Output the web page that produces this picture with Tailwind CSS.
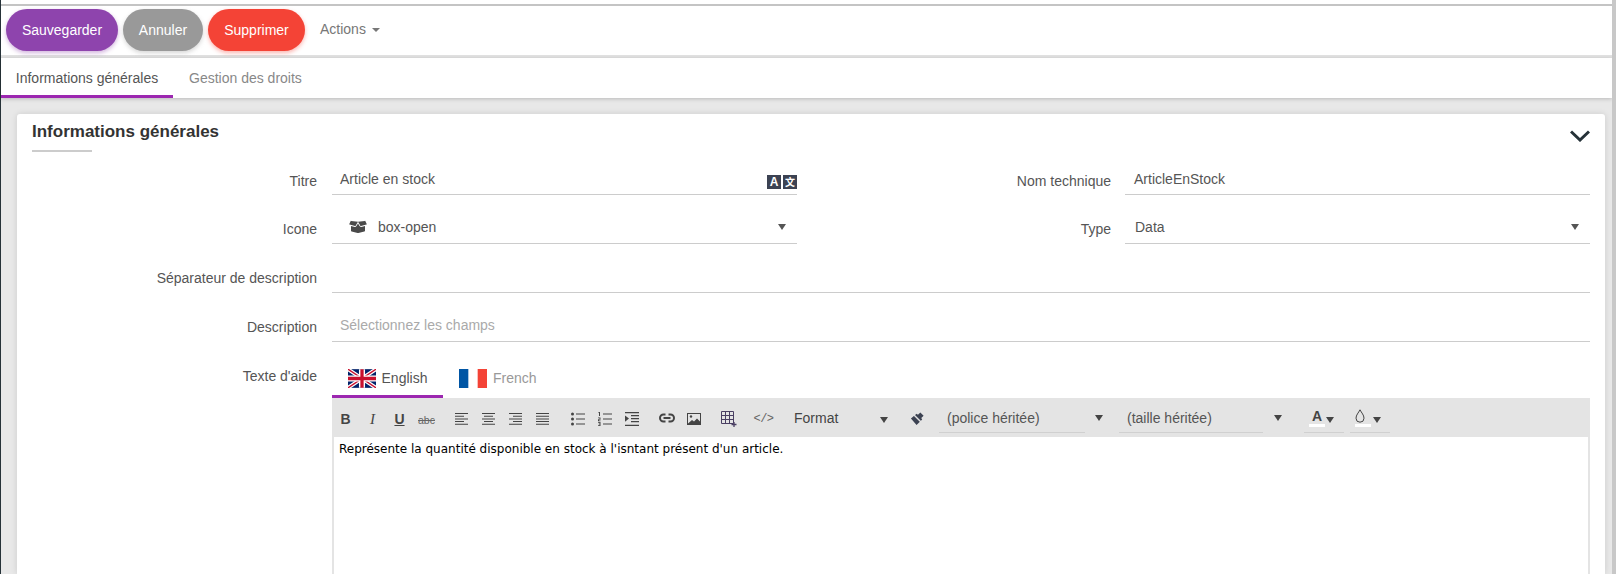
<!DOCTYPE html>
<html lang="fr">
<head>
  <meta charset="UTF-8" />
  <title>Article en stock</title>
  <script src="https://cdn.jsdelivr.net/npm/@tailwindcss/browser@4"></script>
</head>
<body class="h-[574px] overflow-hidden bg-[#e8e8e8] font-['Liberation_Sans',Arial,sans-serif] text-[14px] text-[#555]">
  <div class="flex h-[574px] border-l border-[#263238]">
    <div class="flex min-w-0 flex-1 flex-col">

      <!-- Actions bar -->
      <div class="h-[6px] border-b-2 border-[#c4c4c4] bg-white"></div>
      <div class="flex h-[52px] items-center gap-[5px] border-b-[3px] border-[#e2e2e2] bg-white pb-[1px] pl-[5px]">
        <button class="h-[42px] w-[112px] rounded-full bg-[#8e44ad] text-white shadow-[0_2px_4px_rgba(142,68,173,0.4)]">Sauvegarder</button>
        <button class="h-[42px] w-[80px] rounded-full bg-[#999] text-white shadow-[0_2px_4px_rgba(153,153,153,0.4)]">Annuler</button>
        <button class="h-[42px] w-[97px] rounded-full bg-[#f44336] text-white shadow-[0_2px_4px_rgba(244,67,54,0.4)]">Supprimer</button>
        <div class="ml-[10px] mb-[2px] flex items-center gap-[6px] text-[#777]">Actions <span class="mt-[2px] h-0 w-0 border-x-[4px] border-t-[4px] border-x-transparent border-t-[#777]"></span></div>
      </div>

      <!-- Tabs -->
      <div class="flex h-[40px] bg-white shadow-[0_1px_4px_rgba(0,0,0,0.2)]">
        <div class="flex h-[40px] w-[172px] items-center justify-center border-b-[3px] border-[#9c27b0] pt-[3px] text-[#555]">Informations générales</div>
        <div class="flex h-[40px] items-center pl-[16px] text-[#888]">Gestion des droits</div>
      </div>

      <!-- Card -->
      <div class="flex min-h-0 flex-1 pl-[16px] pr-[7px] pt-[16px]">
        <div class="relative flex-1 overflow-hidden rounded-t-[3px] bg-white shadow-[0_0_6px_rgba(0,0,0,0.12)]">
          <div class="pl-[15px] pt-[8px]">
            <h2 class="text-[17px] leading-[20px] font-bold text-[#333]">Informations générales</h2>
            <div class="mt-[8px] h-[2px] w-[60px] bg-[#ccc]"></div>
          </div>
          <svg class="absolute right-[15px] top-[16px] h-[12px] w-[20px]" viewBox="0 0 20 12" fill="none"><path d="M1 1.500 10 10l9-8.500" stroke="#263238" stroke-width="3"/></svg>

          <div class="pr-[15px] pt-[2px]">
            <!-- Titre / Nom technique -->
            <div class="mb-[3px] flex items-end">
              <label class="w-[300px] pb-[4px] text-right leading-[20px]">Titre</label>
              <div class="relative ml-[15px] h-[41px] w-[465px] border-b border-[#ccc] pl-[8px] pt-[15px] leading-[20px]">
                Article en stock
                <div class="absolute bottom-[5px] right-0 flex gap-[2px]">
                  <span class="flex h-[14px] w-[14px] items-center justify-center bg-[#3c4252] text-[12px] font-bold text-white">A</span>
                  <span class="flex h-[14px] w-[14px] items-center justify-center bg-[#3c4252] font-['Noto_Sans_CJK_SC',sans-serif] text-[10px] font-bold text-white">文</span>
                </div>
              </div>
              <label class="w-[314px] pb-[4px] text-right leading-[20px]">Nom technique</label>
              <div class="ml-[14px] h-[41px] flex-1 border-b border-[#ccc] pl-[9px] pt-[15px] leading-[20px]">ArticleEnStock</div>
            </div>
            <!-- Icone / Type -->
            <div class="mb-[3px] flex items-end">
              <label class="w-[300px] pb-[5px] text-right leading-[20px]">Icone</label>
              <div class="relative ml-[15px] flex h-[46px] w-[465px] items-end border-b border-[#ccc] pb-[6px] pl-[17px] leading-[20px]">
                <svg class="mb-[3px] h-[14px] w-[18px]" viewBox="0 0 640 512" fill="#4a4a4a"><path d="M425.700 256c-16.900 0-32.800-9-41.400-23.400L320 126l-64.200 106.600c-8.700 14.500-24.600 23.500-41.500 23.500-4.500 0-9-.6-13.300-1.900L64 215v178c0 14.700 10 27.500 24.200 31l216.200 54.100c10.200 2.500 20.900 2.500 31 0L551.800 424c14.200-3.600 24.200-16.400 24.200-31V215l-137 39.100c-4.300 1.300-8.800 1.900-13.300 1.900zm212.600-112.200L586.800 41c-3.100-6.200-9.800-9.800-16.700-8.900L320 64l91.700 152.100c3.800 6.300 11.400 9.300 18.500 7.300l197.900-56.500c9.900-2.900 14.700-13.900 10.200-23.100zM53.200 41L1.700 143.800c-4.600 9.200.3 20.200 10.100 23l197.900 56.500c7.100 2 14.700-1 18.500-7.300L320 64 69.800 32.100c-6.900-.8-13.500 2.700-16.600 8.900z"/></svg>
                <span class="ml-[11px]">box-open</span>
                <span class="absolute bottom-[13px] right-[11px] h-0 w-0 border-x-[4px] border-t-[6px] border-x-transparent border-t-[#555]"></span>
              </div>
              <label class="w-[314px] pb-[5px] text-right leading-[20px]">Type</label>
              <div class="relative ml-[14px] flex h-[46px] flex-1 items-end border-b border-[#ccc] pb-[6px] pl-[10px] leading-[20px]">
                <span>Data</span>
                <span class="absolute bottom-[13px] right-[11px] h-0 w-0 border-x-[4px] border-t-[6px] border-x-transparent border-t-[#555]"></span>
              </div>
            </div>
            <!-- Separateur -->
            <div class="mb-[3px] flex items-end">
              <label class="w-[300px] pb-[5px] text-right leading-[20px]">Séparateur de description</label>
              <div class="ml-[15px] h-[46px] flex-1 border-b border-[#ccc]"></div>
            </div>
            <!-- Description -->
            <div class="mb-[3px] flex items-end">
              <label class="w-[300px] pb-[5px] text-right leading-[20px]">Description</label>
              <div class="ml-[15px] flex h-[46px] flex-1 items-end border-b border-[#ccc] pb-[6px] pl-[8px] leading-[20px] text-[#aaa]">Sélectionnez les champs</div>
            </div>
            <!-- Texte d'aide -->
            <div class="flex">
              <label class="w-[300px] pt-[21px] text-right leading-[20px]">Texte d'aide</label>
              <div class="ml-[15px] flex-1">
                <div class="flex h-[53px] items-end">
                  <div class="flex h-[37px] w-[111px] items-center justify-center gap-[6px] border-b-[3px] border-[#9c27b0]">
                    <svg class="h-[19px] w-[28px]" viewBox="0 0 60 40"><rect width="60" height="40" fill="#012169"/><path d="M0 0l60 40M60 0 0 40" stroke="#fff" stroke-width="8"/><path d="M0 0l60 40M60 0 0 40" stroke="#c8102e" stroke-width="3"/><path d="M30 0v40M0 20h60" stroke="#fff" stroke-width="13"/><path d="M30 0v40M0 20h60" stroke="#c8102e" stroke-width="7"/></svg>
                    <span>English</span>
                  </div>
                  <div class="flex h-[37px] items-center gap-[6px] pb-[3px] pl-[16px] text-[#999]">
                    <svg class="h-[19px] w-[28px]" viewBox="0 0 3 2" preserveAspectRatio="none"><rect width="1" height="2" fill="#0055a4"/><rect x="2" width="1" height="2" fill="#f44336"/></svg>
                    <span>French</span>
                  </div>
                </div>

                <!-- Editor toolbar -->
                <div class="flex h-[39px] items-center gap-[8px] bg-[#e4e4e4] pt-[2px] text-[#444]">
                  <div class="flex items-center">
                    <span class="mt-[2px] w-[27px] text-center text-[14px] font-bold">B</span>
                    <span class="mt-[2px] w-[27px] text-center font-['Liberation_Serif',serif] text-[15px] italic">I</span>
                    <span class="mt-[2px] w-[27px] text-center text-[14px] font-bold underline">U</span>
                    <span class="mt-[5px] w-[27px] text-center text-[10.500px] text-[#666] line-through">abc</span>
                  </div>
                  <div class="flex">
                    <span class="flex w-[27px] justify-center"><svg class="h-[12px] w-[13px]" viewBox="0 0 13 12" fill="currentColor"><path d="M0 0h13v1H0zM0 2.700h9v1H0zM0 5.400h13v1H0zM0 8.100h9v1H0zM0 10.800h13v1H0z"/></svg></span>
                    <span class="flex w-[27px] justify-center"><svg class="h-[12px] w-[13px]" viewBox="0 0 13 12" fill="currentColor"><path d="M0 0h13v1H0zM2 2.700h9v1H2zM0 5.400h13v1H0zM2 8.100h9v1H2zM0 10.800h13v1H0z"/></svg></span>
                    <span class="flex w-[27px] justify-center"><svg class="h-[12px] w-[13px]" viewBox="0 0 13 12" fill="currentColor"><path d="M0 0h13v1H0zM4 2.700h9v1H4zM0 5.400h13v1H0zM4 8.100h9v1H4zM0 10.800h13v1H0z"/></svg></span>
                    <span class="flex w-[27px] justify-center"><svg class="h-[12px] w-[13px]" viewBox="0 0 13 12" fill="currentColor"><path d="M0 0h13v1H0zM0 2.700h13v1H0zM0 5.400h13v1H0zM0 8.100h13v1H0zM0 10.800h13v1H0z"/></svg></span>
                  </div>
                  <div class="flex">
                    <span class="flex w-[27px] justify-center"><svg class="h-[14px] w-[14px]" viewBox="0 0 14 14" fill="currentColor"><circle cx="1.500" cy="2" r="1.500"/><circle cx="1.500" cy="7" r="1.500"/><circle cx="1.500" cy="12" r="1.500"/><path d="M5 1.500h9v1H5zM5 6.500h9v1H5zM5 11.500h9v1H5z"/></svg></span>
                    <span class="flex w-[27px] justify-center"><svg class="h-[14px] w-[14px]" viewBox="0 0 14 14" fill="currentColor"><path d="M0.500 0h1.500v4H1V1H.500zM0 5.500h2.500v2.200H1V8.500h1.500v.7H0V7.200h1.500v-1H0zM0 10h2.500v4H0v-.7h1.500v-1H.600v-.6h.9v-1H0zM5 1.500h9v1H5zM5 6.500h9v1H5zM5 11.500h9v1H5z"/></svg></span>
                    <span class="flex w-[27px] justify-center"><svg class="h-[14px] w-[14px]" viewBox="0 0 14 14" fill="currentColor"><path d="M0 0h14v1.200H0zM6 3h8v1.200H6zM6 6h8v1.200H6zM6 9h8v1.200H6zM0 12.800h14V14H0zM0 3.500 4 6.600 0 9.700z"/></svg></span>
                  </div>
                  <div class="flex">
                    <span class="flex w-[27px] justify-center"><svg class="h-[10px] w-[16px]" viewBox="0 0 16 10" fill="none" stroke="currentColor" stroke-width="2"><path d="M6.500 1.500H4.500a3.500 3.500 0 0 0 0 7h2M9.500 1.500h2a3.500 3.500 0 0 1 0 7h-2M4.500 5h7"/></svg></span>
                    <span class="flex w-[27px] justify-center"><svg class="h-[12px] w-[14px]" viewBox="0 0 14 12"><path fill="currentColor" d="M0 0h14v12H0z"/><path fill="#e4e4e4" d="M1 1h12v7.500l-3-3-3 3-2-1.500-4 3.500z"/><circle cx="4" cy="3.500" r="1.200" fill="currentColor"/></svg></span>
                  </div>
                  <span class="flex w-[27px] justify-center"><svg class="h-[16px] w-[16px]" viewBox="0 0 16 16" fill="none" stroke="#4a3f63"><path d="M.500.500h12v12H.500zM.500 4.500h12M.500 8.500h12M4.500.500v12M8.500.500v12"/><path d="M13 11v5M10.500 13.500h5" stroke-width="1.300"/></svg></span>
                  <span class="w-[27px] text-center font-['Liberation_Mono',monospace] text-[12px] tracking-[-0.5px] text-[#666]">&lt;/&gt;</span>
                  <div class="ml-[9px] flex w-[94px] items-center justify-between">
                    <span class="text-[14px]">Format</span>
                    <span class="mt-[2px] h-0 w-0 border-x-[4px] border-t-[6px] border-x-transparent border-t-[#444]"></span>
                  </div>
                  <svg class="ml-[14px] h-[15px] w-[15px]" viewBox="0 0 16 16"><path fill="#3c4252" d="M1 8 7 3l1.500 1L11 1.500 14.500 5 12 7.500l1 1.500-6 6z"/><path d="M1 1l14 14" stroke="#e4e4e4" stroke-width="1.500"/></svg>
                  <div class="relative ml-[6px] flex h-[29px] w-[146px] items-center border-b border-[#d0d0d0] pl-[8px] text-[#555]">(police héritée)<span class="absolute -right-[18px] top-[11px] h-0 w-0 border-x-[4px] border-t-[6px] border-x-transparent border-t-[#444]"></span></div>
                  <div class="relative ml-[26px] flex h-[29px] w-[144px] items-center border-b border-[#d0d0d0] pl-[8px] text-[#555]">(taille héritée)<span class="absolute -right-[19px] top-[11px] h-0 w-0 border-x-[4px] border-t-[6px] border-x-transparent border-t-[#444]"></span></div>
                  <div class="ml-[33px] flex h-[29px] w-[40px] items-center gap-[1px] border-b border-[#d0d0d0] pl-[5px]">
                    <span class="flex w-[16px] flex-col items-center text-[14px] leading-[14px] font-bold">A<span class="mt-[1px] h-[3px] w-[16px] bg-white"></span></span>
                    <span class="mt-[3px] h-0 w-0 border-x-[4px] border-t-[6px] border-x-transparent border-t-[#444]"></span>
                  </div>
                  <div class="-ml-[2px] flex h-[29px] w-[40px] items-center gap-[2px] border-b border-[#d0d0d0] pl-[5px]">
                    <span class="flex w-[16px] flex-col items-start"><svg class="h-[14px] w-[10px]" viewBox="0 0 10 14" fill="none" stroke="#444"><path d="M5 .800C3.500 3.800 1 6 1 9.200a4 4 0 0 0 8 0C9 6 6.500 3.800 5 .800z"/></svg><span class="mt-[1px] h-[3px] w-[16px] bg-white"></span></span>
                    <span class="mt-[3px] h-0 w-0 border-x-[4px] border-t-[6px] border-x-transparent border-t-[#444]"></span>
                  </div>
                </div>

                <!-- Editor body -->
                <div class="h-[137px] border-x-2 border-[#e4e4e4] px-[5px] pt-[3px] font-['DejaVu_Sans',Verdana,sans-serif] text-[12px] leading-[18px] text-black">Représente la quantité disponible en stock à l'isntant présent d'un article.</div>
              </div>
            </div>
          </div>
        </div>
      </div>
    </div>
    <!-- Scrollbar -->
    <div class="w-[4px] bg-[#c8c8c8]"></div>
  </div>
</body>
</html>
